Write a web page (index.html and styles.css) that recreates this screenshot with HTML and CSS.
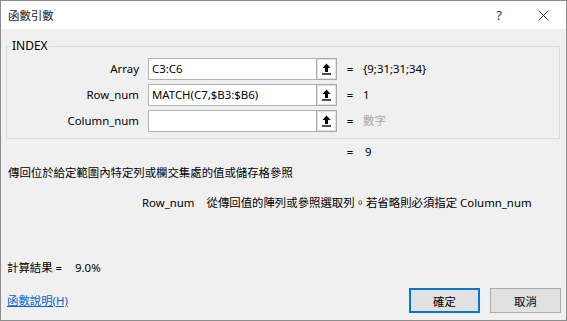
FILE: index.html
```html
<!DOCTYPE html>
<html lang="zh-Hant">

<head>
  <meta charset="UTF-8">
  <title>函數引數</title>
  <link rel="stylesheet" href="styles.css">
</head>

<body>
  <div class="window">
    <div class="titlebar">
      <span class="title">函數引數</span>
      <span class="help">?</span>
      <span class="close">
        <svg width="11" height="11" viewBox="0 0 11 11"><path d="M0.5 0.5 L10.5 10.5 M10.5 0.5 L0.5 10.5" stroke="#333" stroke-width="1" fill="none"/></svg>
      </span>
    </div>

    <div class="content">
      <fieldset class="group">
        <legend>INDEX</legend>
        <div class="arg-grid">
          <label class="arg-label">Array</label>
          <div class="arg-input">C3:C6</div>
          <div class="ref-btn"><svg width="9" height="12" viewBox="0 0 9 12"><path d="M4.5 0.5 L8.5 5 L6 5 L6 9 L3 9 L3 5 L0.5 5 Z" fill="#000"/><rect x="0" y="10.3" width="9" height="1.4" fill="#000"/></svg></div>
          <span class="eq">=</span>
          <span class="val">{9;31;31;34}</span>

          <label class="arg-label">Row_num</label>
          <div class="arg-input">MATCH(C7,$B3:$B6)</div>
          <div class="ref-btn"><svg width="9" height="12" viewBox="0 0 9 12"><path d="M4.5 0.5 L8.5 5 L6 5 L6 9 L3 9 L3 5 L0.5 5 Z" fill="#000"/><rect x="0" y="10.3" width="9" height="1.4" fill="#000"/></svg></div>
          <span class="eq">=</span>
          <span class="val">1</span>

          <label class="arg-label">Column_num</label>
          <div class="arg-input"></div>
          <div class="ref-btn"><svg width="9" height="12" viewBox="0 0 9 12"><path d="M4.5 0.5 L8.5 5 L6 5 L6 9 L3 9 L3 5 L0.5 5 Z" fill="#000"/><rect x="0" y="10.3" width="9" height="1.4" fill="#000"/></svg></div>
          <span class="eq">=</span>
          <span class="val hint">數字</span>
        </div>
      </fieldset>

      <div class="formula-result">
        <span class="eq">=</span>
        <span class="val">9</span>
      </div>

      <p class="func-desc">傳回位於給定範圍內特定列或欄交集處的值或儲存格參照</p>

      <div class="arg-desc">
        <span class="arg-name">Row_num</span>
        <span>從傳回值的陣列或參照選取列。若省略則必須指定 Column_num</span>
      </div>

      <div class="calc-result">
        <span>計算結果 =</span>
        <span class="calc-value">9.0%</span>
      </div>

      <div class="footer">
        <a class="help-link" href="#">函數說明(H)</a>
        <button class="btn btn-default">確定</button>
        <button class="btn">取消</button>
      </div>
    </div>
  </div>
</body>

</html>
```

FILE: styles.css
```css
body {
  margin: 0;
  font-family: "Noto Sans", "Noto Sans CJK TC", sans-serif;
  font-size: 11.4px;
  color: #000;
}

.window {
  width: 567px;
  height: 321px;
  box-sizing: border-box;
  border: 1px solid #8c8c8c;
  background-color: #f0f0f0;
  display: flex;
  flex-direction: column;
}

.titlebar {
  height: 28px;
  background-color: #fff;
  display: flex;
  align-items: center;
}

.title {
  padding-left: 7px;
  color: #1a1a1a;
}

.help {
  margin-left: auto;
  width: 44px;
  padding-left: 4px;
  text-align: center;
  font-size: 13px;
  color: #333;
}

.close {
  width: 45px;
  height: 28px;
  display: flex;
  align-items: center;
  justify-content: center;
}

.content {
  padding: 0 5px 0 6px;
  line-height: 16px;
}

.group {
  margin: 9px 1px 0 -1px;
  padding: 4px 0 6px 0;
  border: 1px solid #dcdcdc;
  min-width: 0;
}

.group legend {
  margin-left: 4px;
  padding: 0 1px;
  font-size: 12px;
  line-height: 16px;
}

.arg-grid {
  display: grid;
  grid-template-columns: 141px 168px 21px 26px 1fr;
  grid-auto-rows: 22px;
  row-gap: 4px;
  align-items: center;
}

.arg-label {
  text-align: right;
  padding-right: 9px;
}

.arg-input {
  height: 22px;
  box-sizing: border-box;
  border: 1px solid #b4b4b4;
  border-right: none;
  background-color: #fff;
  padding: 2px 3px;
  white-space: nowrap;
  overflow: hidden;
}

.ref-btn {
  height: 22px;
  box-sizing: border-box;
  border: 1px solid #a8a8a8;
  box-shadow: inset 0 0 0 1px #e3e3e3;
  background-color: #fff;
  display: flex;
  align-items: center;
  justify-content: center;
}

.eq {
  text-align: center;
}

.val {
  white-space: nowrap;
}

.hint {
  color: #a6a6a6;
}

.formula-result {
  margin-top: 5px;
  padding-left: 330px;
  display: flex;
}

.formula-result .eq {
  width: 26px;
}

.formula-result .val {
  padding-left: 2px;
}

.func-desc {
  margin: 5px 0 0 1px;
}

.arg-desc {
  margin-top: 14px;
  padding-left: 135px;
  display: flex;
  gap: 12px;
}

.calc-result {
  margin-top: 49px;
  display: flex;
}

.calc-value {
  margin-left: 13px;
}

.footer {
  margin-top: 12px;
  display: flex;
  align-items: center;
  gap: 10px;
}

.help-link {
  color: #0066cc;
  text-decoration: underline;
  margin-right: auto;
}

.btn {
  width: 71px;
  height: 25px;
  box-sizing: border-box;
  border: 1px solid #adadad;
  background-color: #e1e1e1;
  font-family: inherit;
  font-size: 11.4px;
  color: #000;
  padding: 0;
}

.btn-default {
  border-color: #0078d7;
  box-shadow: inset 0 0 0 1px #0078d7;
}
```
